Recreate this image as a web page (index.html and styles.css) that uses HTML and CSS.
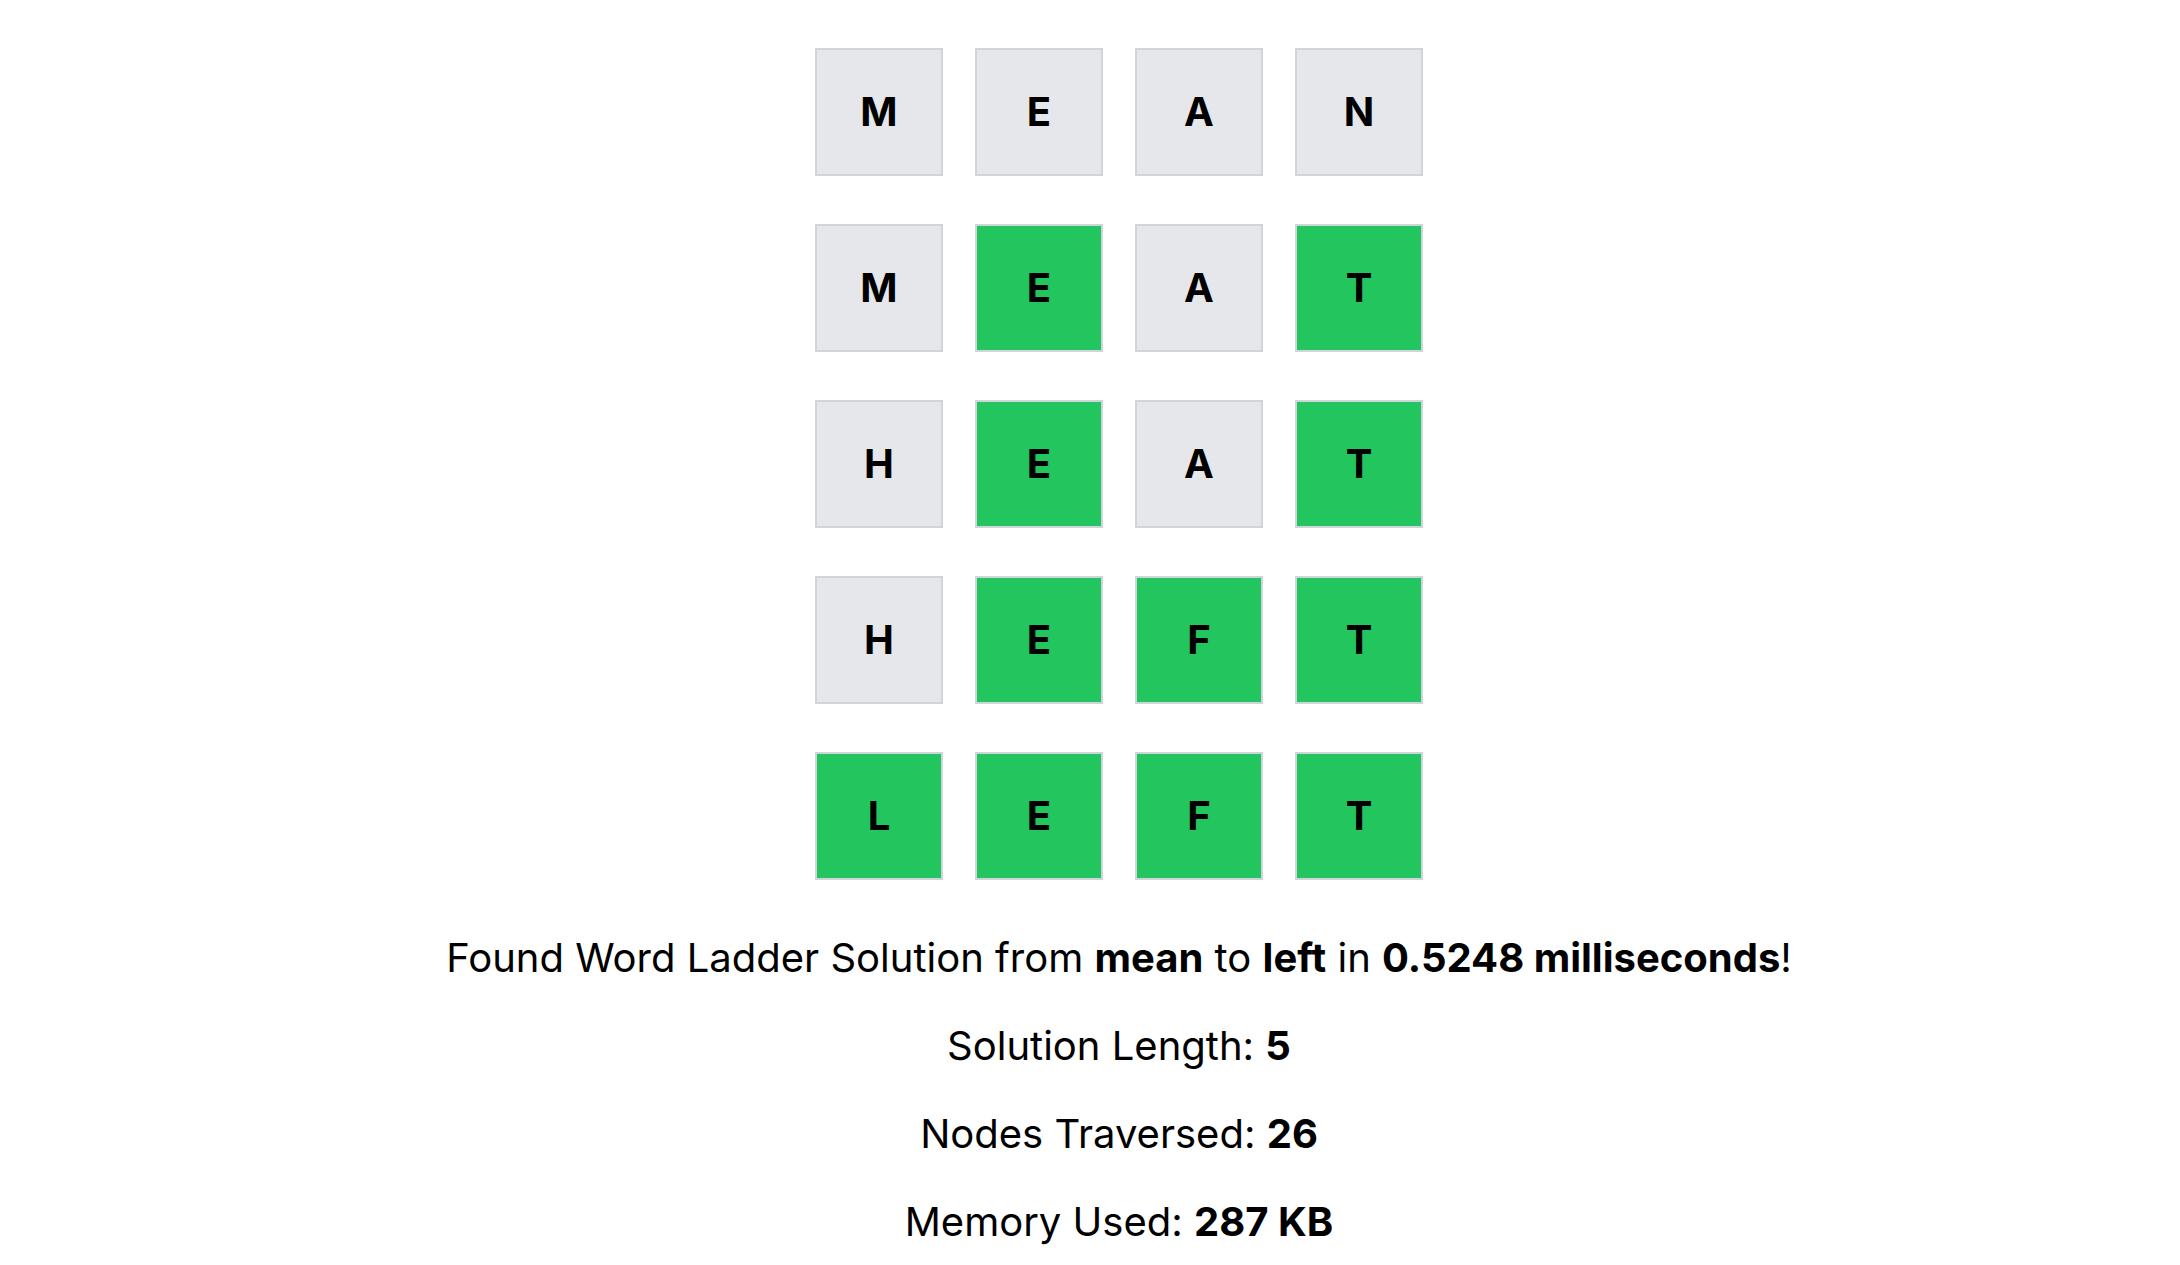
FILE: index.html
```html
<!DOCTYPE html>
<html lang="en">
<head>
<meta charset="utf-8">
<title>Word Ladder</title>
<link rel="stylesheet" href="styles.css">
</head>
<body>
<main class="page">
  <section class="ladder">
    <div class="row">
      <div class="tile">M</div><div class="tile">E</div><div class="tile">A</div><div class="tile">N</div>
    </div>
    <div class="row">
      <div class="tile">M</div><div class="tile match">E</div><div class="tile">A</div><div class="tile match">T</div>
    </div>
    <div class="row">
      <div class="tile">H</div><div class="tile match">E</div><div class="tile">A</div><div class="tile match">T</div>
    </div>
    <div class="row">
      <div class="tile">H</div><div class="tile match">E</div><div class="tile match">F</div><div class="tile match">T</div>
    </div>
    <div class="row">
      <div class="tile match">L</div><div class="tile match">E</div><div class="tile match">F</div><div class="tile match">T</div>
    </div>
  </section>
  <section class="stats">
    <p>Found Word Ladder Solution from <b>mean</b> to <b>left</b> in <b>0.5248 milliseconds</b>!</p>
    <p>Solution Length: <b>5</b></p>
    <p>Nodes Traversed: <b>26</b></p>
    <p>Memory Used: <b>287 KB</b></p>
  </section>
</main>
</body>
</html>
```
FILE: styles.css
```css
html, body {
  margin: 0;
  padding: 0;
  background: #ffffff;
}
body {
  font-family: Inter, "Noto Sans", sans-serif;
  color: #000000;
}
.page {
  display: flex;
  flex-direction: column;
  align-items: center;
  gap: 50px;
  padding: 48px 0 40px 58px;
}
.ladder {
  display: flex;
  flex-direction: column;
  gap: 48px;
}
.row {
  display: flex;
  gap: 32px;
}
.tile {
  box-sizing: border-box;
  width: 128px;
  height: 128px;
  border: 2px solid #d1d5db;
  background: #e5e7eb;
  display: flex;
  align-items: center;
  justify-content: center;
  font-size: 40px;
  font-weight: 700;
  line-height: 1;
}
.tile.match {
  background: #22c55e;
}
.stats {
  display: flex;
  flex-direction: column;
  align-items: center;
  gap: 32px;
}
.stats p {
  margin: 0;
  font-size: 40px;
  line-height: 56px;
  text-align: center;
}
.stats b {
  font-weight: 700;
}
```
